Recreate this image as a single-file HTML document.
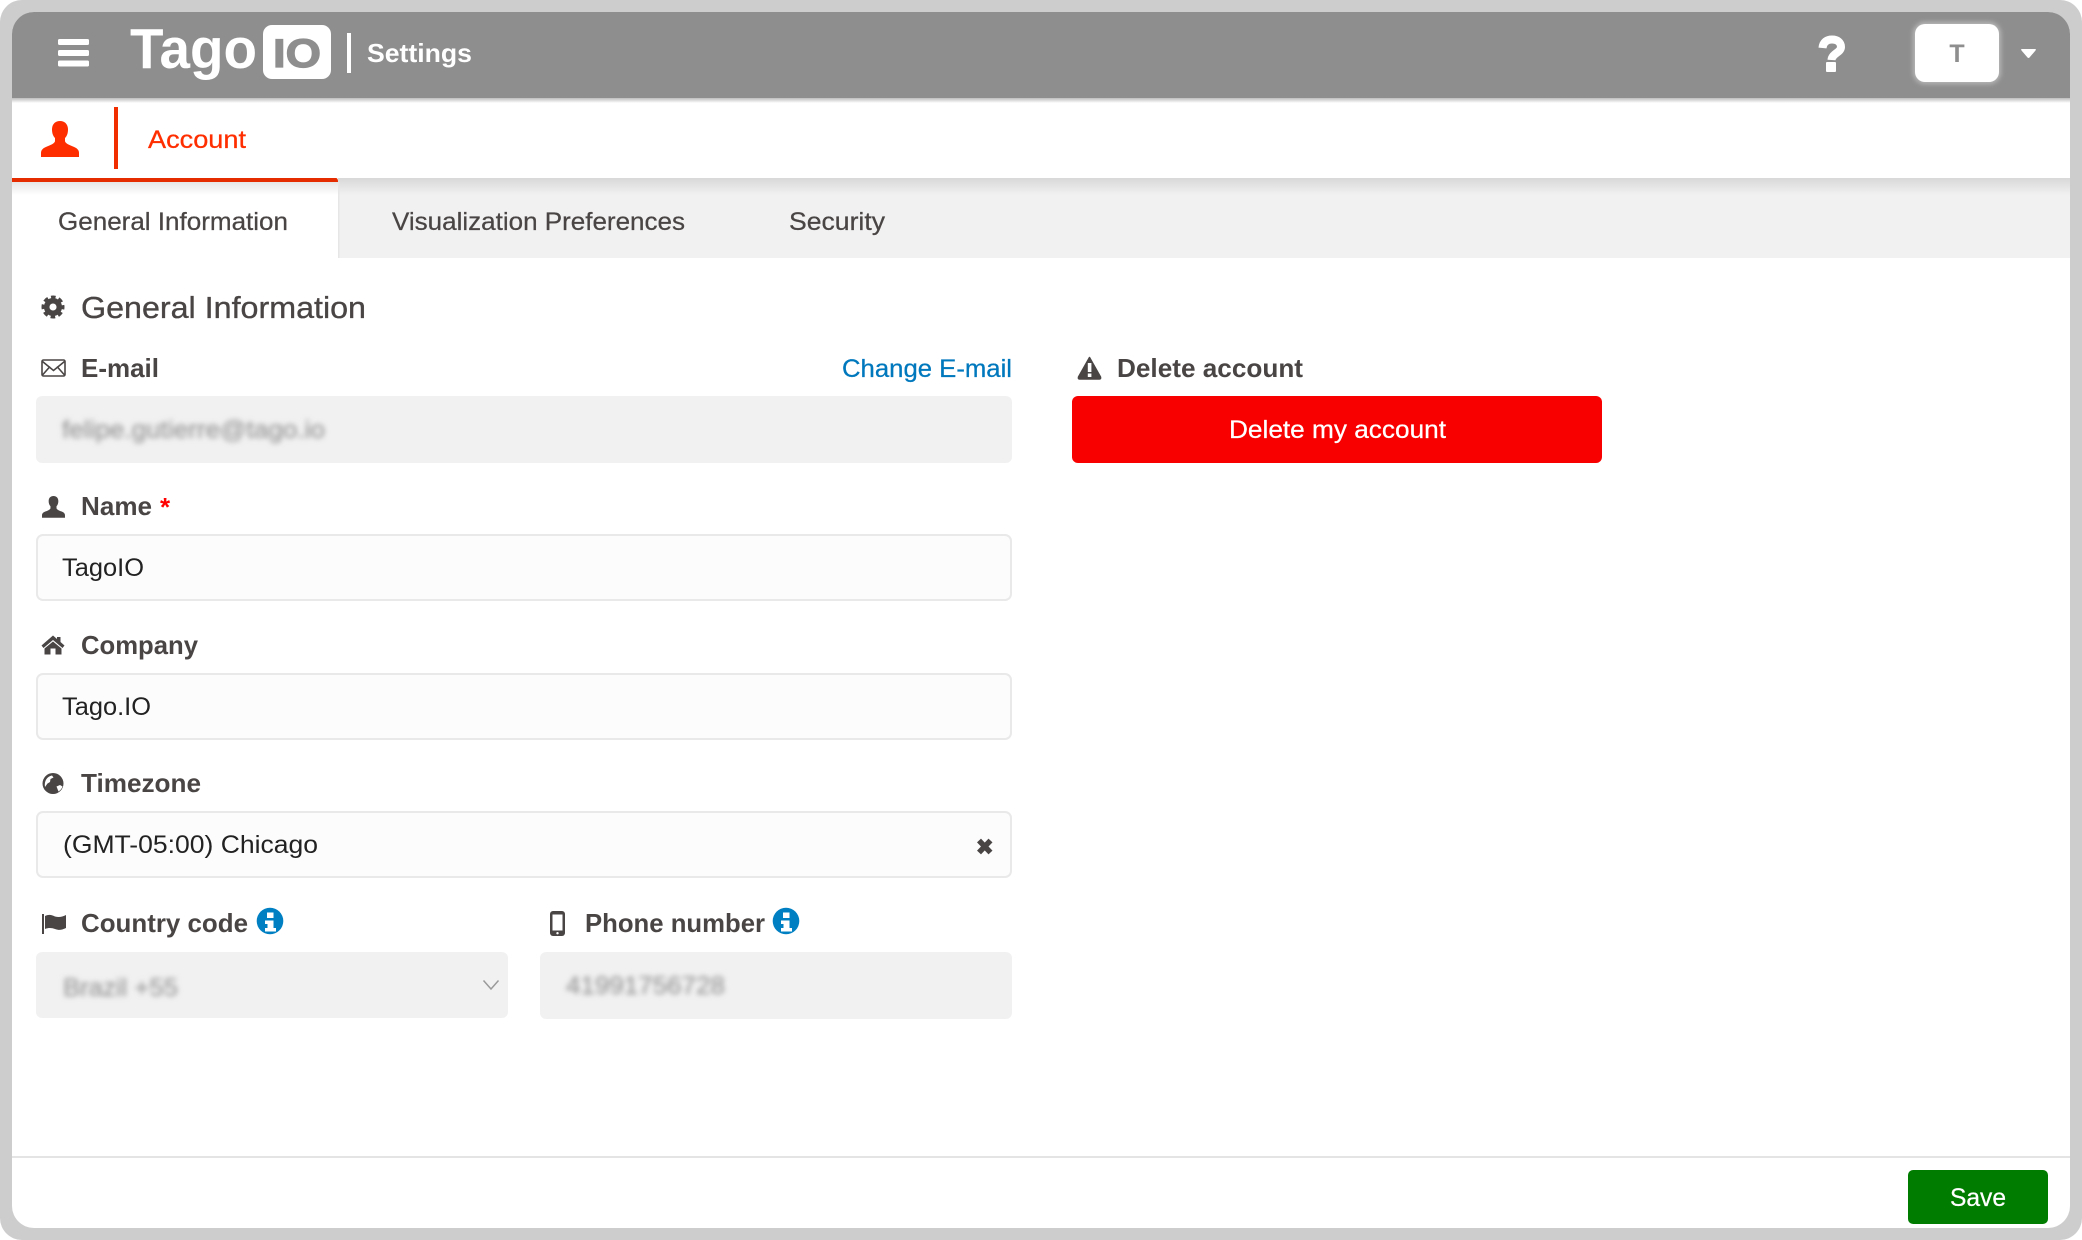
<!DOCTYPE html>
<html lang="en">
<head>
<meta charset="utf-8">
<title>TagoIO Settings</title>
<style>
html,body{margin:0;padding:0;background:#fff;width:2082px;height:1240px;overflow:hidden}
svg{display:block}
text{font-family:"Liberation Sans",Arial,sans-serif;fill:#4a4545}
.b{font-weight:700;font-size:26px}
.n{font-size:25px;stroke:currentColor;stroke-width:.25px;color:#4a4545}
.v{font-size:25px;fill:#222}
</style>
</head>
<body>
<svg width="2082" height="1240" viewBox="0 0 2082 1240" xmlns="http://www.w3.org/2000/svg">
<defs>
<clipPath id="c"><rect x="12" y="12" width="2058" height="1216" rx="22"/></clipPath>
<linearGradient id="g1" x1="0" y1="0" x2="0" y2="1"><stop offset="0" stop-color="#bdbdbd"/><stop offset="1" stop-color="#fff"/></linearGradient>
<linearGradient id="g2" x1="0" y1="0" x2="0" y2="1"><stop offset="0" stop-color="#d8d8d8"/><stop offset="1" stop-color="#f1f1f1"/></linearGradient>
<linearGradient id="g3" x1="0" y1="0" x2="0" y2="1"><stop offset="0" stop-color="#e6e6e6"/><stop offset="1" stop-color="#fff"/></linearGradient>
<filter id="bl" x="-10%" y="-50%" width="120%" height="200%"><feGaussianBlur stdDeviation="2.6"/></filter>
<filter id="gl" x="-20%" y="-20%" width="140%" height="140%"><feGaussianBlur stdDeviation="2.5"/></filter>
</defs>
<rect width="2082" height="1240" fill="#fff"/>
<rect width="2082" height="1240" rx="22" fill="#cdcdcd"/>
<g clip-path="url(#c)">
<rect x="12" y="12" width="2058" height="1216" fill="#fff"/>
<rect x="12" y="12" width="2058" height="86" fill="#8e8e8e"/>
<rect x="12" y="98" width="2058" height="5" fill="url(#g1)"/>
<rect x="12" y="178" width="2058" height="80" fill="#f1f1f1"/>
<rect x="338" y="178" width="1732" height="17" fill="url(#g2)"/>
<rect x="12" y="178" width="326" height="80" fill="#fff"/>
<rect x="12" y="182" width="326" height="13" fill="url(#g3)"/>
<rect x="338" y="182" width="1.5" height="76" fill="#e6e6e6"/>
<path d="M12 178H336Q338 178 338 182H12Z" fill="#e52b00"/>
<rect x="12" y="1156" width="2058" height="2" fill="#e4e4e4"/>
</g>

<!-- header -->
<g fill="#fff">
<rect x="58" y="39" width="31" height="6" rx="1.500"/>
<rect x="58" y="50" width="31" height="6" rx="1.500"/>
<rect x="58" y="60.500" width="31" height="6" rx="1.500"/>
</g>
<text x="130" y="68" font-size="57" font-weight="700" textLength="127" lengthAdjust="spacingAndGlyphs" style="fill:#fff">Tago</text>
<rect x="263" y="25" width="68" height="54" rx="9" fill="#fff"/>
<text x="273" y="67" font-size="40" font-weight="700" textLength="48" lengthAdjust="spacingAndGlyphs" stroke="#8e8e8e" stroke-width="1.200" style="fill:#8e8e8e">IO</text>
<rect x="347" y="33" width="4" height="40" fill="#fff"/>
<text x="367" y="62" class="b" textLength="105" lengthAdjust="spacingAndGlyphs" style="fill:#fff">Settings</text>
<path d="M1822.500 48C1823 42 1827 39.500 1832 39.500C1837.500 39.500 1841 42.500 1841 47C1841 52.500 1832 53.500 1831.500 60" fill="none" stroke="#fff" stroke-width="8"/>
<rect x="1826" y="62" width="10" height="10" rx="1" fill="#fff"/>
<rect x="1913" y="22" width="88" height="62" rx="12" fill="#b8b8b8" filter="url(#gl)"/>
<rect x="1915" y="24" width="84" height="58" rx="10" fill="#fff"/>
<text x="1957" y="62" font-size="25" font-weight="700" text-anchor="middle" style="fill:#8e8e8e">T</text>
<path d="M2022 49H2035Q2036.500 49 2035.500 50.500L2029.500 57.500Q2028.500 58.500 2027.500 57.500L2021.500 50.500Q2020.500 49 2022 49Z" fill="#fff"/>

<!-- account nav -->
<path transform="translate(41 121)" fill="#ff2e00" d="M19 0C14 0 11 3.500 11 8.500C11 12 12 15 14 17V20C14 22 10 24 6 25.500C2 27 0 29 0 32V36H38V32C38 29 36 27 32 25.500C28 24 24 22 24 20V17C26 15 27 12 27 8.500C27 3.500 24 0 19 0Z"/>
<rect x="114" y="107" width="4" height="62" fill="#f02e00"/>
<text x="148" y="148" class="n" textLength="98" lengthAdjust="spacingAndGlyphs" style="fill:#ff2e00;color:#ff2e00">Account</text>

<!-- tabs -->
<text x="58" y="230" class="n" textLength="230" lengthAdjust="spacingAndGlyphs">General Information</text>
<text x="392" y="230" class="n" textLength="293" lengthAdjust="spacingAndGlyphs">Visualization Preferences</text>
<text x="789" y="230" class="n" textLength="96" lengthAdjust="spacingAndGlyphs">Security</text>

<!-- heading -->
<circle cx="53" cy="307" r="6.300" fill="none" stroke="#4a4545" stroke-width="5.500"/>
<circle cx="53" cy="307" r="9.500" fill="none" stroke="#4a4545" stroke-width="4" stroke-dasharray="4.400 3.060" stroke-dashoffset="2.200"/>
<text x="81" y="318" font-size="31" textLength="285" lengthAdjust="spacingAndGlyphs" stroke="#4a4545" stroke-width=".35">General Information</text>

<!-- email -->
<g fill="none" stroke="#4a4545" stroke-width="1.600">
<rect x="42" y="360" width="23" height="16" rx="1.500"/>
<path d="M42.500 361.500L53.500 370.500L64.500 361.500M42.500 375L50 366.500M64.500 375L57 366.500"/>
</g>
<text x="81" y="377" class="b" textLength="78" lengthAdjust="spacingAndGlyphs">E-mail</text>
<text x="842" y="377" class="n" textLength="170" lengthAdjust="spacingAndGlyphs" style="fill:#0078bd;color:#0078bd">Change E-mail</text>
<rect x="36" y="396" width="976" height="67" rx="6" fill="#f1f1f1"/>
<text x="62" y="438" class="n" textLength="263" lengthAdjust="spacingAndGlyphs" filter="url(#bl)" style="fill:#959595;color:#959595">felipe.gutierre@tago.io</text>

<!-- delete -->
<path d="M1089.500 357.500L1100.500 377Q1101 379 1099.500 379H1079.500Q1078 379 1078.500 377Z" fill="#4a4545" stroke="#4a4545" stroke-width="1.500" stroke-linejoin="round"/>
<rect x="1087.800" y="363" width="3.600" height="9" fill="#fff"/>
<rect x="1087.800" y="373.500" width="3.600" height="3.500" fill="#fff"/>
<text x="1117" y="377" class="b" textLength="186" lengthAdjust="spacingAndGlyphs">Delete account</text>
<rect x="1072" y="396" width="530" height="67" rx="6" fill="#f90000"/>
<text x="1229" y="438" class="n" textLength="217" lengthAdjust="spacingAndGlyphs" style="fill:#fff;color:#fff">Delete my account</text>

<!-- name -->
<path transform="translate(42 496) scale(.605)" fill="#4a4545" d="M19 0C14 0 11 3.500 11 8.500C11 12 12 15 14 17V20C14 22 10 24 6 25.500C2 27 0 29 0 32V36H38V32C38 29 36 27 32 25.500C28 24 24 22 24 20V17C26 15 27 12 27 8.500C27 3.500 24 0 19 0Z"/>
<text x="81" y="515" class="b" textLength="71" lengthAdjust="spacingAndGlyphs">Name</text>
<text x="160" y="516" class="b" style="fill:#f00">*</text>
<rect x="37" y="535" width="974" height="65" rx="6" fill="#fcfcfc" stroke="#e9e9e9" stroke-width="2"/>
<text x="62" y="576" class="v" textLength="82" lengthAdjust="spacingAndGlyphs">TagoIO</text>

<!-- company -->
<path fill="#4a4545" d="M53 635.500L41.500 645.500L43.500 648L53 640L62.500 648L64.500 645.500L60.500 642V637H57V639ZM44.500 648.500L53 641.500L61.500 648.500V654.500H55.500V648.500H50.500V654.500H44.500Z"/>
<text x="81" y="654" class="b" textLength="117" lengthAdjust="spacingAndGlyphs">Company</text>
<rect x="37" y="674" width="974" height="65" rx="6" fill="#fcfcfc" stroke="#e9e9e9" stroke-width="2"/>
<text x="62" y="715" class="v" textLength="89" lengthAdjust="spacingAndGlyphs">Tago.IO</text>

<!-- timezone -->
<circle cx="53" cy="783.500" r="10.500" fill="#4a4545"/>
<path fill="#fff" d="M45 787C44 781 47 776.500 52 775.500L53.500 777.500L50.500 779L50 782L47.500 783.500ZM58.500 791.500L56.500 786.500L60 785L62.500 786.500Q61.500 789.500 58.500 791.500Z"/>
<text x="81" y="792" class="b" textLength="120" lengthAdjust="spacingAndGlyphs">Timezone</text>
<rect x="37" y="812" width="974" height="65" rx="6" fill="#fcfcfc" stroke="#e9e9e9" stroke-width="2"/>
<text x="63" y="853" class="v" textLength="255" lengthAdjust="spacingAndGlyphs">(GMT-05:00) Chicago</text>
<path d="M979 840.500L990.500 852.500M990.500 840.500L979 852.500" stroke="#4a4545" stroke-width="5.500" fill="none"/>

<!-- country -->
<rect x="42" y="914" width="2" height="20" fill="#4a4545"/>
<path fill="#4a4545" d="M45 916C49 914 52 915 55 916.500C59 917.500 62 917 66 915V928C62 930 59 930.500 55 929C52 928 49 927.500 45 929Z"/>
<text x="81" y="932" class="b" textLength="167" lengthAdjust="spacingAndGlyphs">Country code</text>
<circle cx="270" cy="921" r="13.300" fill="#0080c3"/>
<path fill="#fff" d="M267 912.500H273.500V918H267ZM265 920.500H273.500V928H276V931.500H265V928H267.500V924H265Z"/>
<rect x="36" y="952" width="472" height="66" rx="6" fill="#f1f1f1"/>
<text x="63" y="996" class="n" textLength="115" lengthAdjust="spacingAndGlyphs" filter="url(#bl)" style="fill:#959595;color:#959595">Brazil +55</text>
<path d="M483.500 980.500L491 989L498.500 980.500" fill="none" stroke="#9a9a9a" stroke-width="1.500"/>

<!-- phone -->
<rect x="550" y="911" width="15" height="25" rx="3" fill="#4a4545"/>
<rect x="552.500" y="914.500" width="10" height="16" fill="#fff"/>
<circle cx="557.500" cy="933.200" r="1.200" fill="#fff"/>
<text x="585" y="932" class="b" textLength="180" lengthAdjust="spacingAndGlyphs">Phone number</text>
<circle cx="786" cy="921" r="13.300" fill="#0080c3"/>
<path fill="#fff" d="M783 912.500H789.500V918H783ZM781 920.500H789.500V928H792V931.500H781V928H783.500V924H781Z"/>
<rect x="540" y="952" width="472" height="67" rx="6" fill="#f1f1f1"/>
<text x="566" y="994" class="n" textLength="159" lengthAdjust="spacingAndGlyphs" filter="url(#bl)" style="fill:#959595;color:#959595">41991756728</text>

<!-- footer -->
<rect x="1908" y="1170" width="140" height="54" rx="5" fill="#007c00"/>
<text x="1950" y="1206" class="n" textLength="56" lengthAdjust="spacingAndGlyphs" style="fill:#fff;color:#fff">Save</text>
</svg>
</body>
</html>
